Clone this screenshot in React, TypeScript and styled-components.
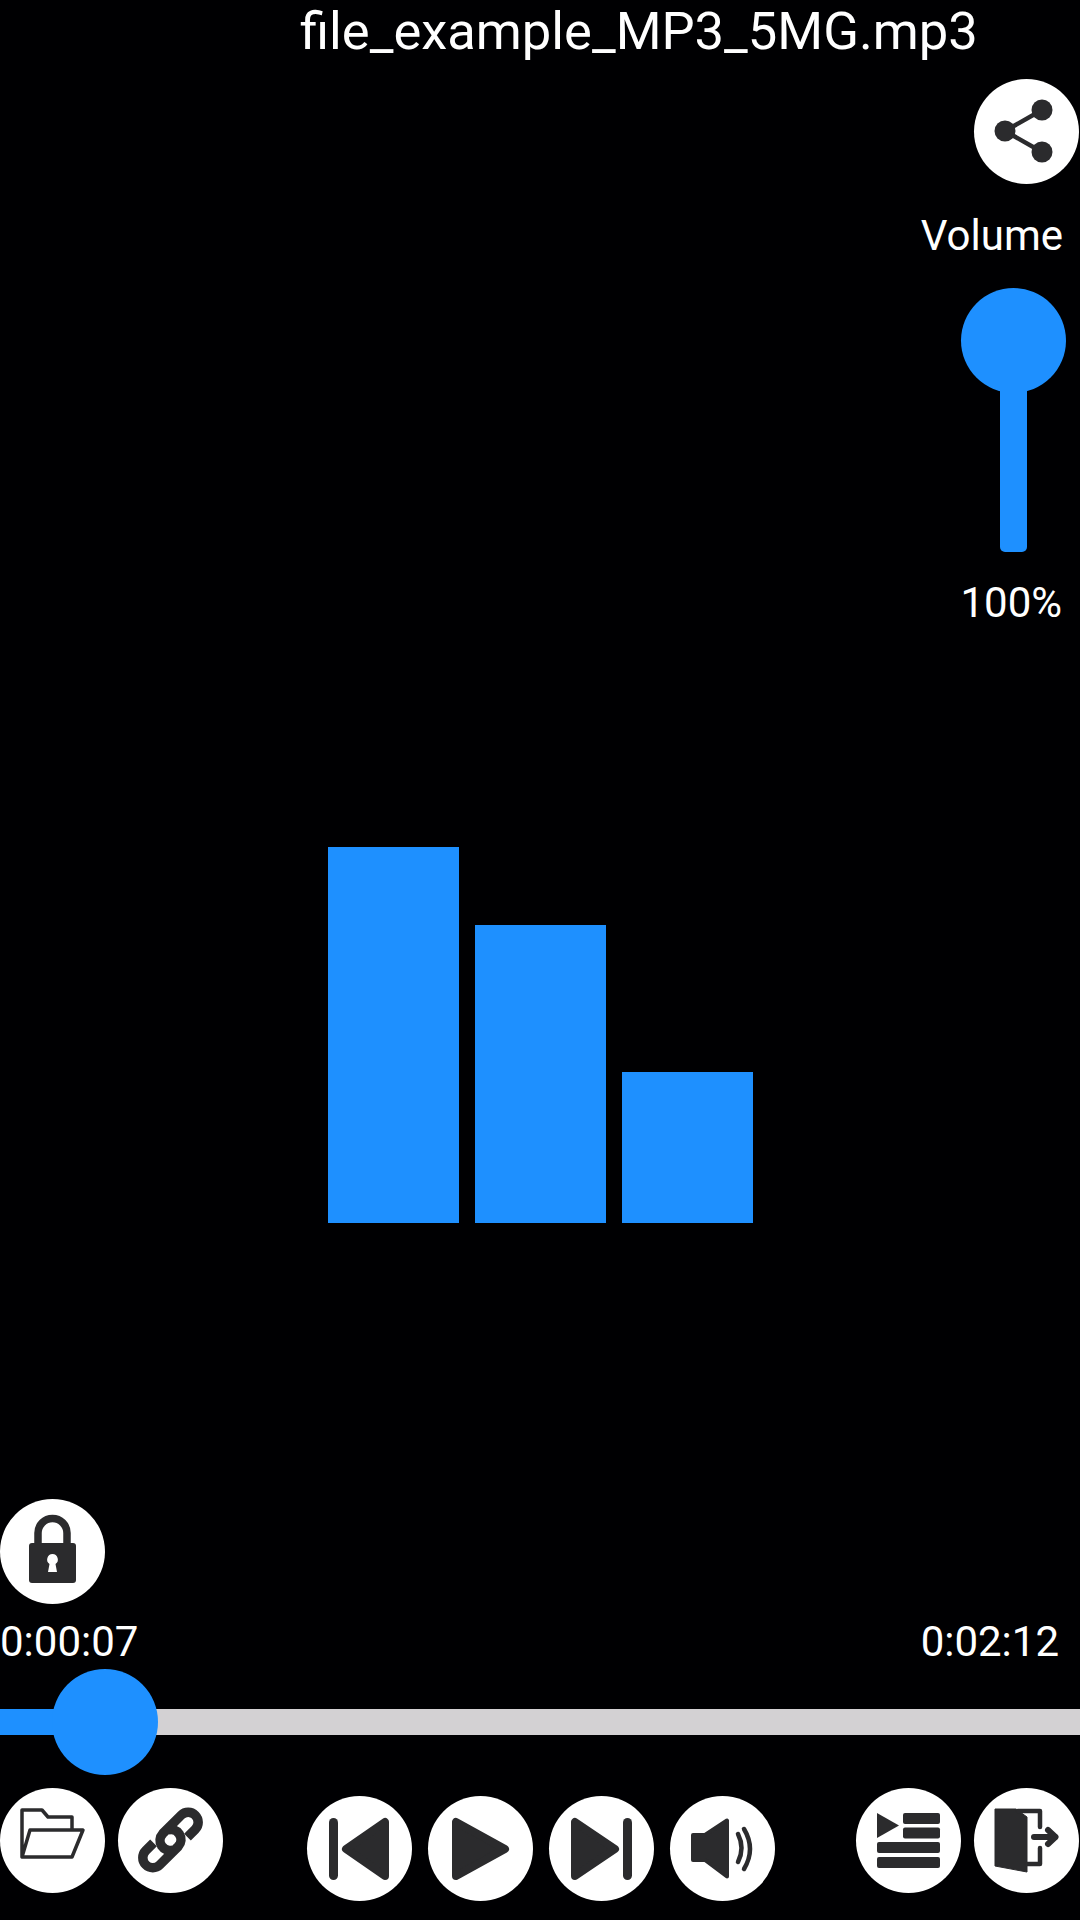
import React from "react";
import styled, { createGlobalStyle } from "styled-components";

const INK = "#2b2b2d";
const BLUE = "#1e90ff";

const Global = createGlobalStyle`
  html, body { margin: 0; padding: 0; background: #000; }
  #root { width: 1080px; height: 1920px; }
`;

const Screen = styled.main`
  width: 1080px;
  height: 1920px;
  background: #000002;
  color: #fff;
  font-family: Roboto, "Liberation Sans", sans-serif;
  display: flex;
  flex-direction: column;
  overflow: hidden;
`;

const Title = styled.h1`
  margin: 0 0 0 300px;
  height: 60px;
  font-size: 52.500px;
  line-height: 63px;
  font-weight: 400;
  white-space: nowrap;
`;

const RightRow = styled.div<{ $pad: number; $top: number }>`
  display: flex;
  justify-content: flex-end;
  padding-right: ${(p) => p.$pad}px;
  margin-top: ${(p) => p.$top}px;
`;

const Label = styled.span`
  font-size: 42px;
  line-height: 44px;
  white-space: nowrap;
`;

const Round = styled.button<{ $drop?: number }>`
  width: 105px;
  height: 105px;
  flex: none;
  padding: 0;
  border: 0;
  border-radius: 50%;
  background: #fff;
  margin-top: ${(p) => p.$drop ?? 0}px;
  display: block;
  svg { display: block; width: 105px; height: 105px; }
`;

const VolumeSlider = styled.div`
  width: 105px;
  height: 264px;
  display: flex;
  flex-direction: column;
  align-items: center;
`;

const VolumeThumb = styled.div`
  width: 105px;
  height: 105px;
  flex: none;
  border-radius: 50%;
  background: ${BLUE};
`;

const VolumeTrack = styled.div`
  width: 27px;
  flex: 1;
  margin-top: -6px;
  background: ${BLUE};
  border-radius: 0 0 5px 5px;
`;

const Bars = styled.div`
  margin: 222px 0 0 328px;
  height: 376px;
  display: flex;
  align-items: flex-end;
  gap: 16px;
`;

const Bar = styled.div<{ $h: number }>`
  width: 131px;
  height: ${(p) => p.$h}px;
  background: ${BLUE};
`;

const LockRow = styled.div`
  margin-top: 276px;
`;

const Times = styled.div`
  margin-top: 16px;
  padding: 0 21px 0 0;
  display: flex;
  justify-content: space-between;
`;

const Seek = styled.div`
  position: relative;
  margin-top: 6px;
  height: 104px;
  display: flex;
  align-items: center;
`;

const SeekTrack = styled.div`
  width: 100%;
  height: 26px;
  background: #d3d1d3;
`;

const SeekFill = styled.div`
  height: 100%;
  background: ${BLUE};
`;

const SeekThumb = styled.div`
  position: absolute;
  left: 52px;
  top: -1px;
  width: 106px;
  height: 106px;
  border-radius: 50%;
  background: ${BLUE};
`;

const Controls = styled.div`
  margin-top: 14px;
  display: flex;
  align-items: flex-start;
`;

const Group = styled.div<{ $gap: number; $left?: number }>`
  display: flex;
  gap: ${(p) => p.$gap}px;
  margin-left: ${(p) => p.$left ?? 0}px;
`;

const Art = ({ children }: { children: React.ReactNode }) => (
  <svg viewBox="0 0 105 105" fill={INK} stroke="none">{children}</svg>
);

const ShareIcon = () => (
  <Art>
    <path d="M68 31 31 52 68 73" fill="none" stroke={INK} strokeWidth="4.500" />
    <circle cx="68" cy="31" r="10.500" />
    <circle cx="31" cy="52" r="10.500" />
    <circle cx="68" cy="73" r="10.500" />
  </Art>
);

const LockIcon = () => (
  <Art>
    <path d="M38 46V34a14.500 14.500 0 0 1 29 0V46" fill="none" stroke={INK} strokeWidth="7.500" />
    <rect x="29" y="44" width="47" height="40" rx="3" />
    <path
      d="M52.500 55a5.500 5.500 0 0 1 3 10l1.500 8h-9l1.500-8a5.500 5.500 0 0 1 3-10Z"
      fill="#fff"
    />
  </Art>
);

const FolderIcon = () => (
  <Art>
    <g fill="none" stroke={INK} strokeWidth="3.500" strokeLinejoin="round" strokeLinecap="round">
      <path d="M72 41V29H48L42 22H22V69H72L83 42H30L22 69" />
    </g>
  </Art>
);

const LinkIcon = () => {
  const hook = "M-14-10H-25A10 10 0 0 0-25 10H1A10 10 0 0 0 5-9";
  return (
    <Art>
      <g
        transform="translate(52.500 52) rotate(-45)"
        fill="none"
        stroke={INK}
        strokeWidth="9.500"
      >
        <path d={hook} />
        <path d={hook} transform="rotate(180)" />
      </g>
    </Art>
  );
};

const Tri = ({ d }: { d: string }) => (
  <path d={d} stroke={INK} strokeWidth="8" strokeLinejoin="round" />
);

const PrevIcon = () => (
  <Art>
    <rect x="22" y="22" width="9" height="62" rx="4.500" />
    <Tri d="M78 26V80L39 53Z" />
  </Art>
);

const PlayIcon = () => (
  <Art>
    <Tri d="M28 26V80L77 53Z" />
  </Art>
);

const NextIcon = () => (
  <Art>
    <Tri d="M26 26V80L66 53Z" />
    <rect x="74" y="22" width="9" height="62" rx="4.500" />
  </Art>
);

const SpeakerIcon = () => (
  <Art>
    <path
      d="M23 39H35L57 24.500V80.500L35 64H23Z"
      stroke={INK}
      strokeWidth="4"
      strokeLinejoin="round"
    />
    <g fill="none" stroke={INK} strokeWidth="4.500" strokeLinecap="round">
      <path d="M68 38Q75 52 68 66" />
      <path d="M74 33Q86 53 74 73" />
    </g>
  </Art>
);

const ListIcon = () => (
  <Art>
    <path d="M21 25 43 37.500 21 50Z" />
    <rect x="47" y="25" width="37" height="11" rx="2" />
    <rect x="47" y="39.500" width="37" height="11" rx="2" />
    <rect x="21" y="54" width="63" height="11" rx="2" />
    <rect x="21" y="69" width="63" height="11" rx="2" />
  </Art>
);

const ExitIcon = () => (
  <Art>
    <path d="M21 21H42L53 29V84L21 78Z" stroke={INK} strokeWidth="1" strokeLinejoin="round" />
    <g fill="none" stroke={INK} strokeWidth="4.500" strokeLinecap="round" strokeLinejoin="round">
      <path d="M44 23H66V39" />
      <path d="M66 60V76H53" />
    </g>
    <g fill="none" stroke={INK} strokeWidth="6" strokeLinecap="round" strokeLinejoin="round">
      <path d="M60 49H81" />
      <path d="M74 42 81.500 49 74 56" />
    </g>
  </Art>
);

export default function App() {
  return (
    <Screen>
      <Global />
      <Title>file_example_MP3_5MG.mp3</Title>
      <RightRow $pad={1} $top={19}>
        <Round aria-label="Share"><ShareIcon /></Round>
      </RightRow>
      <RightRow $pad={17} $top={30}>
        <Label>Volume</Label>
      </RightRow>
      <RightRow $pad={14} $top={30}>
        <VolumeSlider>
          <VolumeThumb />
          <VolumeTrack />
        </VolumeSlider>
      </RightRow>
      <RightRow $pad={18} $top={29}>
        <Label>100%</Label>
      </RightRow>
      <Bars>
        <Bar $h={376} />
        <Bar $h={298} />
        <Bar $h={151} />
      </Bars>
      <LockRow>
        <Round aria-label="Lock"><LockIcon /></Round>
      </LockRow>
      <Times>
        <Label>0:00:07</Label>
        <Label>0:02:12</Label>
      </Times>
      <Seek>
        <SeekTrack>
          <SeekFill style={{ width: `${(7 / 132) * 100}%` }} />
        </SeekTrack>
        <SeekThumb />
      </Seek>
      <Controls>
        <Group $gap={13}>
          <Round aria-label="Open"><FolderIcon /></Round>
          <Round aria-label="Link"><LinkIcon /></Round>
        </Group>
        <Group $gap={16} $left={84}>
          <Round $drop={8} aria-label="Previous"><PrevIcon /></Round>
          <Round $drop={8} aria-label="Play"><PlayIcon /></Round>
          <Round $drop={8} aria-label="Next"><NextIcon /></Round>
          <Round $drop={8} aria-label="Sound"><SpeakerIcon /></Round>
        </Group>
        <Group $gap={13} $left={81}>
          <Round aria-label="Playlist"><ListIcon /></Round>
          <Round aria-label="Exit"><ExitIcon /></Round>
        </Group>
      </Controls>
    </Screen>
  );
}
